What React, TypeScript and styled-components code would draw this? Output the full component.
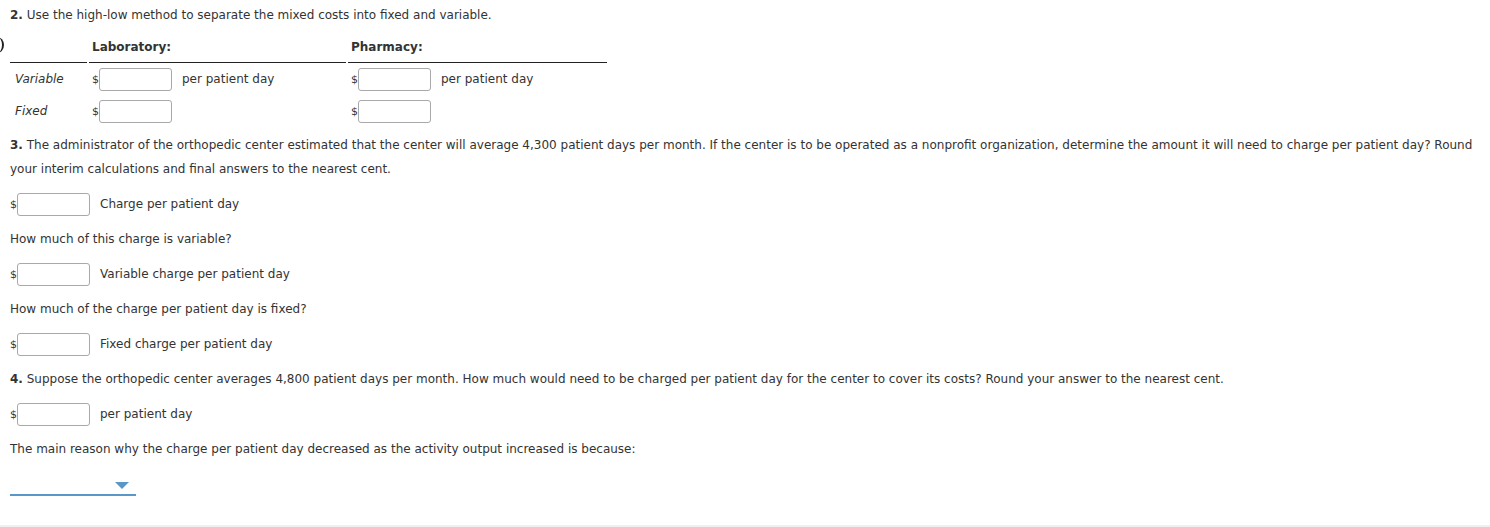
import React from "react";
import styled, { createGlobalStyle } from "styled-components";

const GlobalStyle = createGlobalStyle`
  html, body {
    margin: 0;
    padding: 0;
    background: #fff;
  }
  body {
    font-family: "DejaVu Sans", Verdana, sans-serif;
    font-size: 12px;
    color: #333;
  }
`;

const Page = styled.div`
  position: relative;
  width: 1490px;
  height: 527px;
  box-sizing: border-box;
  padding: 3px 10px 0 10px;
  border-bottom: 2px solid #f0f0f0;
  overflow: hidden;
`;

const Para = styled.p<{ $gap?: number }>`
  margin: 0;
  line-height: 24px;
  width: 1478px;
  margin-bottom: ${(p) => p.$gap ?? 11}px;
`;

const Marker = styled.span`
  position: absolute;
  left: -10px;
  top: 37px;
  width: 12px;
  height: 16px;
  border-radius: 50%;
  border-right: 2px solid #222;
`;

const Grid = styled.table`
  border-collapse: separate;
  border-spacing: 2px 0;
  margin: 5px 0 6px -2px;
`;

const Head = styled.th<{ $w: number }>`
  width: ${(p) => p.$w}px;
  text-align: left;
  font-weight: bold;
  padding: 0 3px;
  height: 30px;
  border-bottom: 1px solid #222;
  vertical-align: middle;
`;

const Cell = styled.td`
  height: 32px;
  padding: 0 3px;
  vertical-align: middle;
  white-space: nowrap;
`;

const RowLabel = styled(Cell)`
  font-style: italic;
  padding-left: 5px;
`;

const Field = styled.span`
  display: inline-flex;
  align-items: center;
`;

const Dollar = styled.span`
  font-size: 11px;
`;

const Box = styled.input`
  width: 73px;
  height: 23px;
  box-sizing: border-box;
  border: 1px solid #a9a9a9;
  border-radius: 3px;
  box-shadow: inset 0 0 1px rgba(0, 0, 0, 0.05);
  background: #fff;
  margin: 0;
  padding: 0 4px;
`;

const Unit = styled.span`
  margin-left: 10px;
`;

const AnswerRow = styled.div`
  display: flex;
  align-items: center;
  height: 24px;
  margin-bottom: 11px;
`;

const Select = styled.div`
  position: relative;
  width: 126px;
  height: 22px;
  margin-top: 11px;
  border-bottom: 2px solid #5a97c9;
`;

const Caret = styled.span`
  position: absolute;
  right: 7px;
  top: 10px;
  width: 0;
  height: 0;
  border-left: 7px solid transparent;
  border-right: 7px solid transparent;
  border-top: 7px solid #5a97c9;
`;

const Money = ({ label }: { label?: string }) => (
  <Field>
    <Dollar>$</Dollar>
    <Box />
    {label && <Unit>{label}</Unit>}
  </Field>
);

const Answer = ({ label }: { label: string }) => (
  <AnswerRow>
    <Money label={label} />
  </AnswerRow>
);

export default function App() {
  return (
    <Page>
      <GlobalStyle />
      <Marker />
      <Para $gap={0}>
        <b>2.</b> Use the high-low method to separate the mixed costs into fixed and variable.
      </Para>
      <Grid>
        <thead>
          <tr>
            <Head $w={71} />
            <Head $w={251}>Laboratory:</Head>
            <Head $w={253}>Pharmacy:</Head>
          </tr>
        </thead>
        <tbody>
          <tr>
            <RowLabel>Variable</RowLabel>
            <Cell>
              <Money label="per patient day" />
            </Cell>
            <Cell>
              <Money label="per patient day" />
            </Cell>
          </tr>
          <tr>
            <RowLabel>Fixed</RowLabel>
            <Cell>
              <Money />
            </Cell>
            <Cell>
              <Money />
            </Cell>
          </tr>
        </tbody>
      </Grid>
      <Para>
        <b>3.</b> The administrator of the orthopedic center estimated that the center will average 4,300 patient days per
        month. If the center is to be operated as a nonprofit organization, determine the amount it will need to charge
        per patient day? Round your interim calculations and final answers to the nearest cent.
      </Para>
      <Answer label="Charge per patient day" />
      <Para>How much of this charge is variable?</Para>
      <Answer label="Variable charge per patient day" />
      <Para>How much of the charge per patient day is fixed?</Para>
      <Answer label="Fixed charge per patient day" />
      <Para>
        <b>4.</b> Suppose the orthopedic center averages 4,800 patient days per month. How much would need to be charged
        per patient day for the center to cover its costs? Round your answer to the nearest cent.
      </Para>
      <Answer label="per patient day" />
      <Para $gap={0}>The main reason why the charge per patient day decreased as the activity output increased is because:</Para>
      <Select>
        <Caret />
      </Select>
    </Page>
  );
}
